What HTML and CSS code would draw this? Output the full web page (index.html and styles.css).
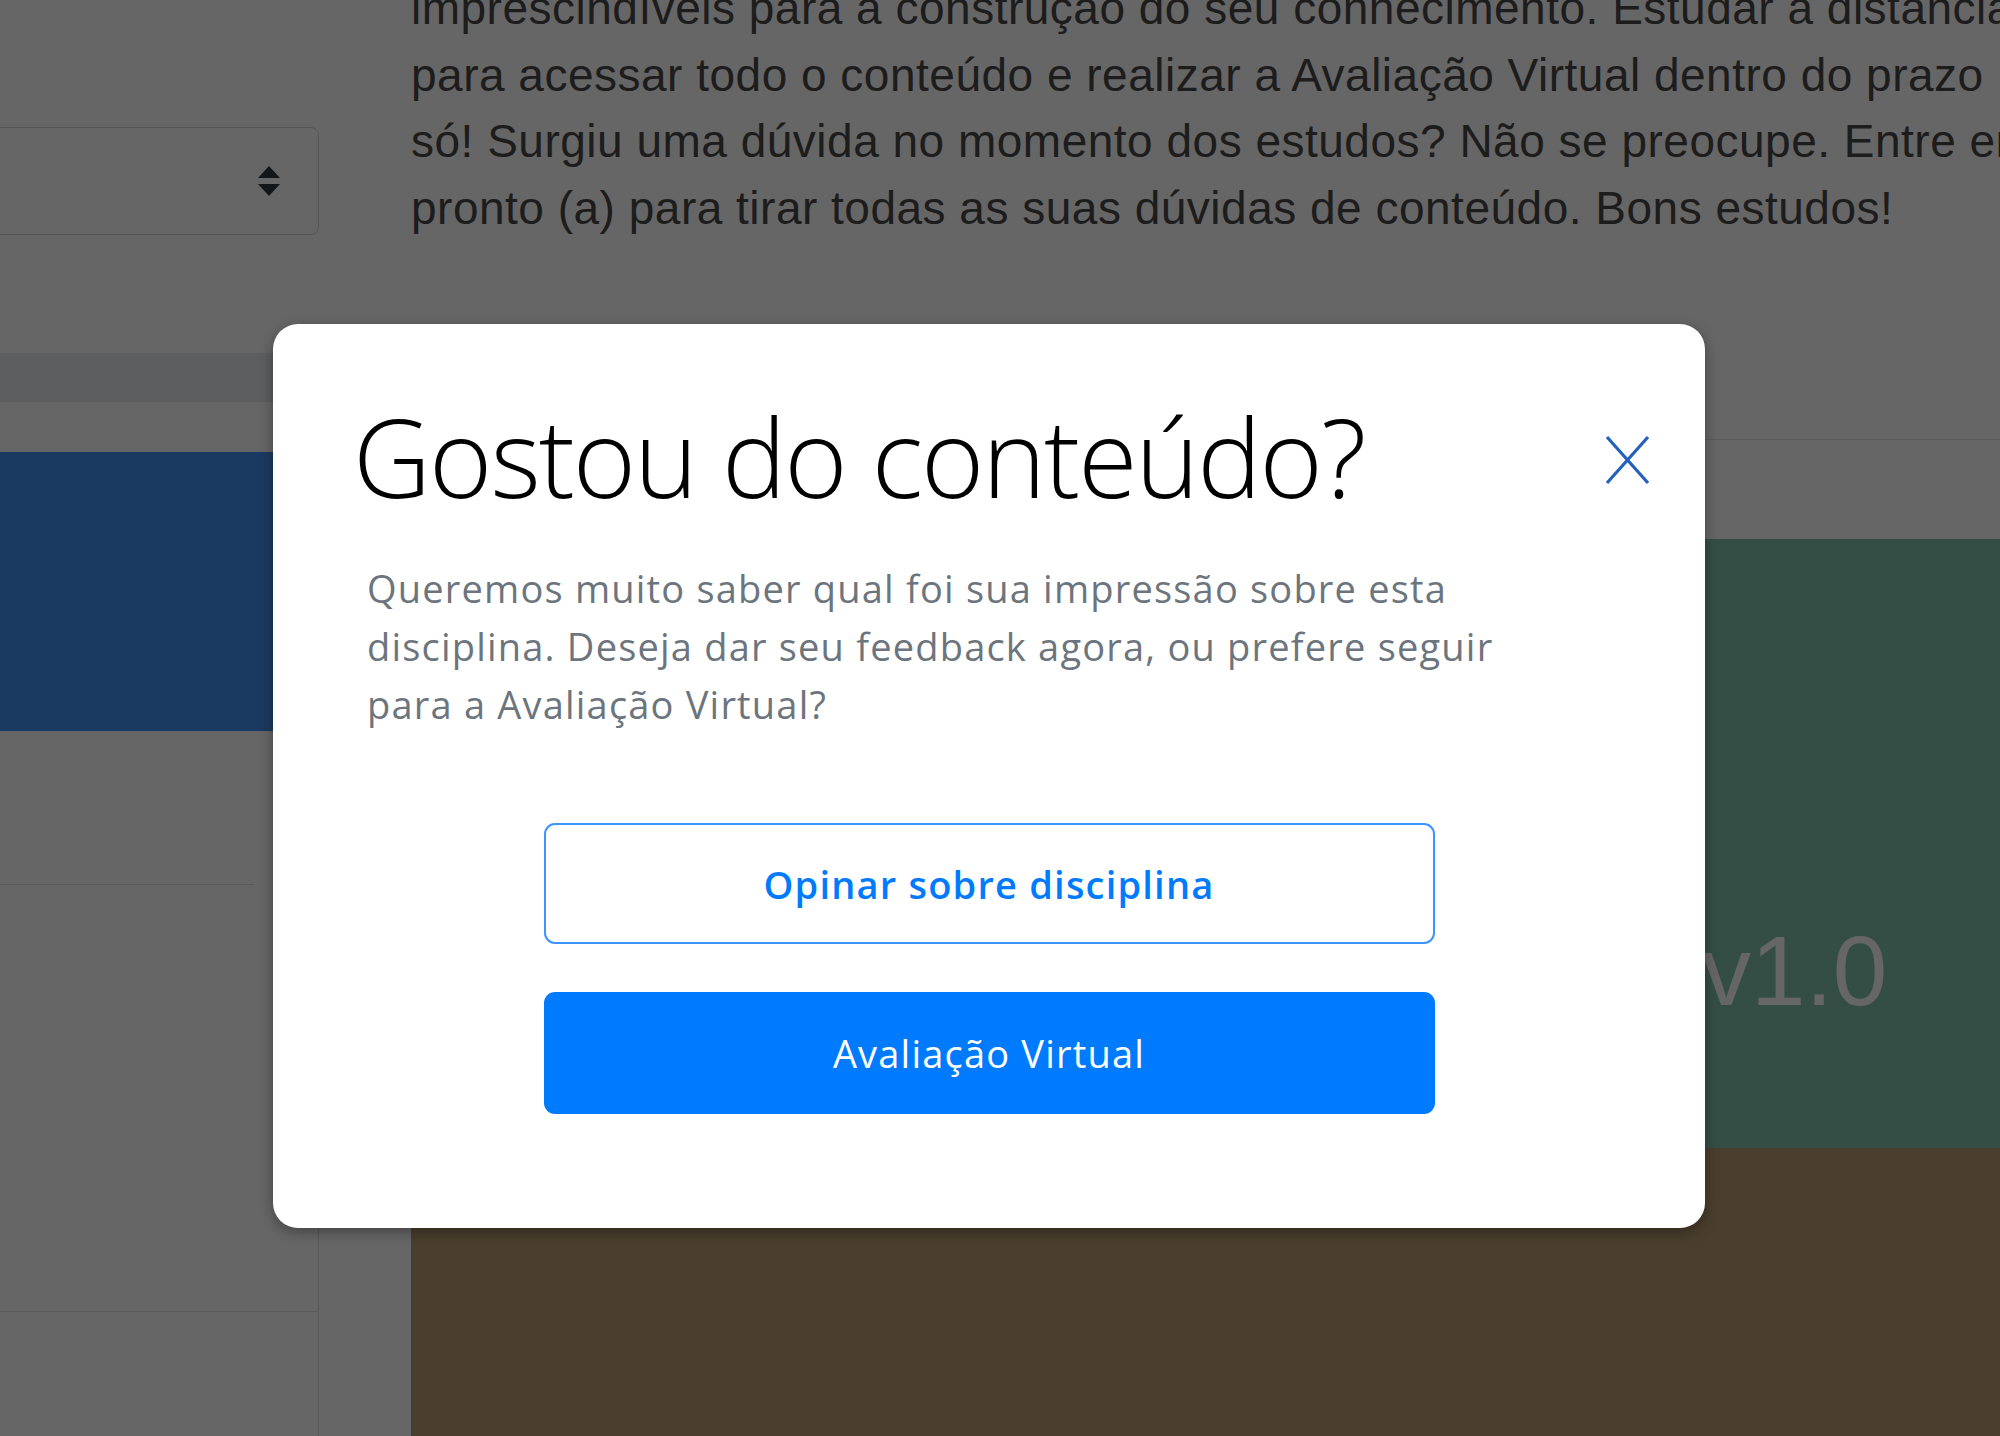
FILE: index.html
```html
<!DOCTYPE html>
<html lang="pt-BR">
<head>
<meta charset="utf-8">
<title>Gostou do conteúdo?</title>
<link rel="stylesheet" href="styles.css">
</head>
<body>
<div class="page">
  <aside class="sidebar">
    <div class="select">
      <svg class="select-arrows" width="22" height="30" viewBox="0 0 22 30" aria-hidden="true">
        <polygon points="11,0 22,12 0,12" fill="#343a40"/>
        <polygon points="0,18 22,18 11,30" fill="#343a40"/>
      </svg>
    </div>
    <div class="side-bar"></div>
    <div class="side-banner"></div>
    <div class="side-item"></div>
    <div class="side-list">
      <div class="side-row"></div>
    </div>
  </aside>
  <main class="main">
    <p class="intro">
      <span class="intro-line">imprescindíveis para a construção do seu conhecimento. Estudar a distância</span>
      <span class="intro-line">para acessar todo o conteúdo e realizar a Avaliação Virtual dentro do prazo</span>
      <span class="intro-line">só! Surgiu uma dúvida no momento dos estudos? Não se preocupe. Entre em</span>
      <span class="intro-line">pronto (a) para tirar todas as suas dúvidas de conteúdo. Bons estudos!</span>
    </p>
    <div class="tabs-line"></div>
    <div class="banner"><span class="banner-version">v1.0</span></div>
    <div class="cover"></div>
  </main>
</div>

<div class="overlay"></div>

<div class="modal" role="dialog" aria-labelledby="modal-title">
  <div class="modal-header">
    <h1 class="modal-title" id="modal-title">Gostou do conteúdo?</h1>
    <button class="modal-close" aria-label="Fechar">
      <svg width="45" height="50" viewBox="0 0 45 50" aria-hidden="true">
        <line x1="2" y1="2" x2="43" y2="48" stroke="#2461bd" stroke-width="3.2"/>
        <line x1="43" y1="2" x2="2" y2="48" stroke="#2461bd" stroke-width="3.2"/>
      </svg>
    </button>
  </div>
  <p class="modal-text">Queremos muito saber qual foi sua impressão sobre esta disciplina. Deseja dar seu feedback agora, ou prefere seguir para a Avaliação Virtual?</p>
  <div class="modal-actions">
    <button class="btn btn-outline">Opinar sobre disciplina</button>
    <button class="btn btn-primary">Avaliação Virtual</button>
  </div>
</div>
</body>
</html>
```

FILE: styles.css
```css
html, body {
  margin: 0;
  padding: 0;
}

body {
  width: 2000px;
  height: 1436px;
  overflow: hidden;
  position: relative;
  background: #ffffff;
  font-family: "Liberation Sans", Arial, sans-serif;
}

.page {
  display: grid;
  grid-template-columns: 319px 1fr;
  column-gap: 92px;
  height: 1436px;
}

/* ---------- sidebar ---------- */
.sidebar {
  display: flex;
  flex-direction: column;
}

.select {
  margin-top: 127px;
  margin-left: -12px;
  height: 108px;
  box-sizing: border-box;
  border: 1px solid #d3d6da;
  border-radius: 8px;
  display: flex;
  align-items: center;
  justify-content: flex-end;
  padding-right: 38px;
}

.select-arrows {
  display: block;
}

.side-bar {
  margin-top: 118px;
  height: 49px;
  background: #e9ebf0;
}

.side-banner {
  margin-top: 50px;
  height: 279px;
  background: #4491f3;
}

.side-item {
  height: 153px;
  margin-right: 65px;
  border-bottom: 1px solid #dee2e6;
}

.side-list {
  flex: 1;
  border-right: 1px solid #dee2e6;
}

.side-row {
  height: 426px;
  border-bottom: 1px solid #dee2e6;
}

/* ---------- main ---------- */
.main {
  display: flex;
  flex-direction: column;
  min-width: 0;
}

.intro {
  margin: -25px 0 0 0;
  font-size: 46px;
  letter-spacing: 0.5px;
  line-height: 66.5px;
  color: #4a4a4a;
}

.intro-line {
  display: block;
  white-space: nowrap;
  overflow: hidden;
}

.tabs-line {
  margin-top: 198px;
  height: 1px;
  background: #dee2e6;
}

.banner {
  margin-top: 99px;
  height: 609px;
  background: #84c3ad;
  display: flex;
  align-items: flex-start;
  padding-top: 374px;
  padding-left: 1291px;
  box-sizing: border-box;
}

.banner-version {
  font-family: "Liberation Sans", Arial, sans-serif;
  font-size: 98px;
  line-height: 116px;
  color: #ffffff;
}

.cover {
  flex: 1;
  background: #b99e73;
}

/* ---------- overlay + modal ---------- */
.overlay {
  position: absolute;
  inset: 0;
  background: rgba(0, 0, 0, 0.6);
}

.modal {
  position: absolute;
  left: 273px;
  top: 324px;
  width: 1432px;
  box-sizing: border-box;
  background: #ffffff;
  border-radius: 25px;
  box-shadow: 0 4px 14px rgba(0, 0, 0, 0.35);
  padding: 68px 0 114px 0;
  font-family: "Open Sans", "Noto Sans", sans-serif;
}

.modal-header {
  display: flex;
  justify-content: space-between;
  align-items: flex-start;
  padding: 0 55px 0 80px;
}

.modal-title {
  margin: 0;
  font-family: "Open Sans", "Noto Sans", sans-serif;
  font-weight: 300;
  font-size: 108px;
  line-height: 130px;
  color: #000000;
  letter-spacing: -2px;
}

.modal-close {
  margin-top: 43px;
  padding: 0;
  border: 0;
  background: transparent;
  width: 45px;
  height: 50px;
  cursor: pointer;
}

.modal-close svg {
  display: block;
}

.modal-text {
  margin: 37px 0 0 0;
  padding: 0 160px 0 94px;
  font-size: 38px;
  letter-spacing: 1.2px;
  line-height: 58px;
  color: #6c757d;
}

.modal-actions {
  margin-top: 90px;
  display: flex;
  flex-direction: column;
  align-items: center;
  gap: 48px;
}

.btn {
  width: 891px;
  box-sizing: border-box;
  border-radius: 11px;
  font-family: "Open Sans", "Noto Sans", sans-serif;
  font-size: 38px;
  letter-spacing: 1.2px;
  cursor: pointer;
}

.btn-outline {
  height: 121px;
  background: #ffffff;
  border: 2px solid #3d94ff;
  color: #007bff;
  font-weight: 600;
}

.btn-primary {
  height: 122px;
  background: #007bff;
  border: 0;
  color: #ffffff;
  font-weight: 400;
}
```
